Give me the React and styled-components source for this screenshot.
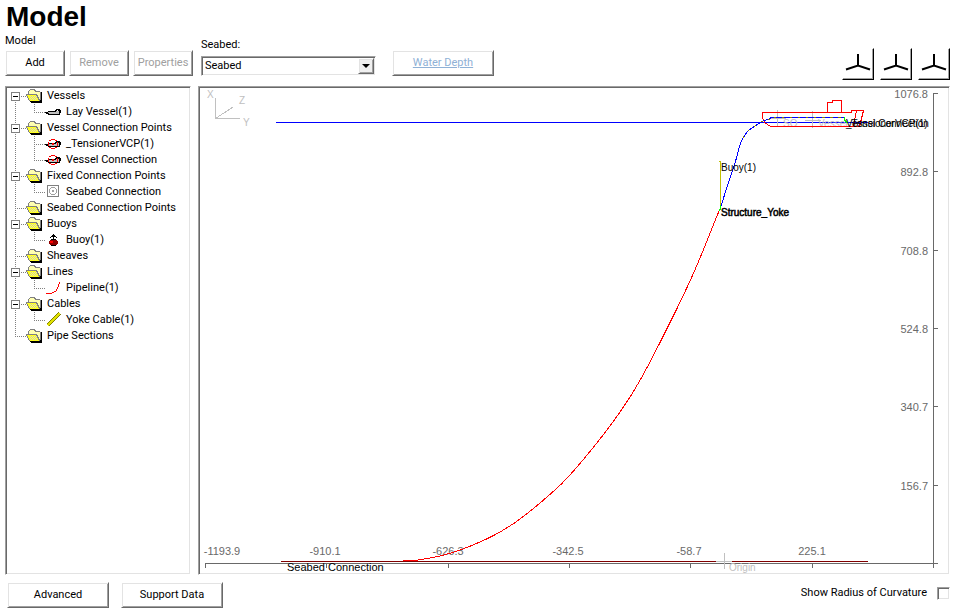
import React, { useState } from 'react';
import styled, { createGlobalStyle, css } from 'styled-components';

const colors = {
  text: '#000',
  disabled: '#a0a0a0',
  link: '#8fb1d6',
  light: '#e3e3e3',
  shadow: '#a0a0a0',
  dark: '#696969',
  face: '#f0f0f0',
  guide: '#808080',
};

const fonts = {
  ui: "Roboto, 'Liberation Sans', sans-serif",
  plot: "'Liberation Sans', Arial, sans-serif",
};

const raised = css`
  border: 1px solid;
  border-color: #fff ${colors.dark} ${colors.dark} #fff;
  box-shadow: inset 1px 1px ${colors.light}, inset -1px -1px ${colors.shadow};
`;

const sunken = css`
  border: 1px solid;
  border-color: ${colors.shadow} #fff #fff ${colors.shadow};
  box-shadow: inset 1px 1px ${colors.dark}, inset -1px -1px ${colors.light};
`;

const GlobalStyle = createGlobalStyle`
  *,
  *::before,
  *::after {
    box-sizing: border-box;
  }

  body {
    margin: 0;
    background: #fff;
    color: ${colors.text};
    font: 11px/16px ${fonts.ui};
  }

  button,
  select,
  input {
    font: inherit;
    color: inherit;
  }
`;

const Page = styled.main`
  padding: 0 10px 8px 5px;
`;

const Title = styled.h1`
  margin: 0;
  padding: 0 1px;
  font: bold 28px/33px ${fonts.plot};
`;

const Toolbar = styled.div`
  display: flex;
  align-items: flex-end;
  margin-bottom: 6px;
`;

const Field = styled.div`
  display: flex;
  flex-direction: column;
  gap: ${props => props.$gap || 0}px;
  margin: 0 ${props => props.$after || 0}px 4px 0;
`;

const ButtonRow = styled.div`
  display: flex;
  gap: ${props => props.$gap}px;
`;

const Button = styled.button`
  ${raised}
  width: ${props => (props.$wide ? 102 : 60)}px;
  height: 26px;
  padding: 0;
  background: #fff;
  white-space: nowrap;

  &:disabled {
    color: ${colors.disabled};
  }
`;

const LinkButton = styled(Button)`
  margin-bottom: 4px;
  color: ${colors.link};
  text-decoration: underline;
`;

const SelectBox = styled.div`
  ${sunken}
  display: grid;
  align-items: center;
  width: 175px;
  height: 20px;
  padding: 1px;

  > * {
    grid-area: 1 / 1;
  }
`;

const Select = styled.select`
  appearance: none;
  width: 100%;
  height: 16px;
  padding: 0 18px 0 2px;
  border: 0;
  background: transparent;
  line-height: 16px;
`;

const SelectArrow = styled.span`
  ${raised}
  display: grid;
  place-items: center;
  justify-self: end;
  width: 16px;
  height: 16px;
  background: ${colors.face};
  pointer-events: none;

  &::before {
    content: '';
    border: 4px solid transparent;
    border-top-color: #000;
    border-bottom: 0;
  }
`;

const Views = styled.div`
  display: flex;
  gap: 6px;
  margin-left: auto;
`;

const ViewButton = styled.button`
  width: 32px;
  height: 32px;
  padding: 0;
  border: 1px solid;
  border-color: #fff #000 #000 #fff;
  box-shadow: inset -1px -1px ${colors.shadow};
  background: #fff;

  svg {
    display: block;
  }
`;

const Panels = styled.div`
  display: grid;
  grid-template-columns: 186px minmax(0, 1fr);
  gap: 7px;
`;

const Panel = styled.section`
  ${sunken}
  padding: 1px;
  background: #fff;
`;

const TreeList = styled.ul`
  margin: 0;
  padding: 0;
  list-style: none;
`;

const TreeRow = styled.div`
  display: flex;
  height: 16px;
  white-space: nowrap;

  svg {
    flex: none;
    margin-right: 5px;
  }
`;

const dotsDown = `repeating-linear-gradient(${colors.guide} 0 1px, transparent 1px 2px)`;
const dotsAcross = `repeating-linear-gradient(90deg, ${colors.guide} 0 1px, transparent 1px 2px)`;

const Guide = styled.span`
  display: flex;
  flex: none;
  align-items: center;
  width: 19px;
  padding-left: 4px;
  background-repeat: no-repeat;
  background-image: ${dotsDown}, ${dotsDown}, ${dotsAcross};
  background-position: 8px 0, 8px 8px, 8px 8px;
  background-size: 1px ${props => (props.$up ? 8 : 0)}px,
    1px ${props => (props.$down ? 8 : 0)}px,
    ${props => (props.$across ? 11 : 0)}px 1px;
`;

const Expander = styled.button`
  display: grid;
  place-items: center;
  width: 9px;
  height: 9px;
  padding: 0;
  border: 1px solid ${colors.guide};
  background: #fff;

  &::before {
    content: '';
    grid-area: 1 / 1;
    width: 5px;
    height: 1px;
    background: #000;
  }

  &[aria-expanded='false']::after {
    content: '';
    grid-area: 1 / 1;
    width: 1px;
    height: 5px;
    background: #000;
  }
`;

const Plot = styled.svg`
  display: block;
  width: 100%;
  height: auto;
  font: 10px ${fonts.plot};
`;

const Footer = styled.footer`
  display: flex;
  align-items: center;
  justify-content: space-between;
  margin-top: 7px;
  padding-left: 2px;
`;

const CheckLabel = styled.label`
  display: flex;
  align-items: center;
  gap: 10px;
  margin-bottom: 4px;
`;

const Checkbox = styled.input`
  ${sunken}
  appearance: none;
  width: 13px;
  height: 13px;
  margin: 0;
  background: #fff;

  &:checked {
    background: linear-gradient(#000, #000) center / 5px 5px no-repeat #fff;
  }
`;

const FolderIcon = () => (
  <svg width="16" height="16" shapeRendering="crispEdges" aria-hidden="true">
    <path d="M3 2h6v2h5v9H3z" fill="#ffffb0" />
    <path d="M2 3h1V2h1V1h5v1h1v1h4v1H9V3H8V2H4v1H3v4H2z" fill="#808080" />
    <path d="M1 7h10l3 6H4z" fill="#ffff20" />
    <path d="M4 8h1v1H4zM6 8h1v1H6zM8 8h1v1H8zM10 8h1v1h-1zM5 9h1v1H5zM7 9h1v1H7zM9 9h1v1H9zM4 10h1v1H4zM6 10h1v1H6zM8 10h1v1H8zM10 10h1v1h-1zM5 11h1v1H5zM7 11h1v1H7zM9 11h1v1H9z" fill="#d8d8c0" />
    <path d="M0 6h11v1h1v2h1v2h1v2h-1v-1h-1v-2h-1V8h-1V7H1v1h1v2h1v2h1v1H3v-1H2v-2H1V8H0z" fill="#808080" />
    <path d="M14 4h1v9h-1z" fill="#808080" />
    <path d="M4 13h10v-1h1V4h1v11H5v-1H4z" />
  </svg>
);

const hull = (
  <>
    <path d="M0 8h3V7h7V6h1V5h4v1h1v3h-1v2H3v-1H1V9H0z" />
    <path d="M3 8h8V7h3v3H4V9H3z" fill="#c0c0c0" />
    <path d="M12 6h1v1h-1z" fill="#fff" />
  </>
);

const itemIcons = {
  vessel: hull,
  connection: (
    <>
      {hull}
      <path
        d="M6 3h4v1H6zM4 4h2v1H4zM10 4h2v1h-2zM3 6h1v4H3zM12 6h1v4h-1zM4 11h2v1H4zM10 11h2v1h-2zM6 12h4v1H6zM7 7h2v2H7z"
        fill="#f00"
      />
    </>
  ),
  fixed: (
    <>
      <path d="M2.500 1.500h11v11h-11z" fill="#fff" stroke="#808080" />
      <path
        d="M6 3h4v1H6zM5 4h1v1H5zM10 4h1v1h-1zM4 5h1v4H4zM11 5h1v4h-1zM5 9h1v1H5zM10 9h1v1h-1zM6 10h4v1H6zM7 6h2v2H7z"
        fill="#a0a0a0"
      />
    </>
  ),
  buoy: (
    <>
      <path d="M8 2h1v5H8zM7 3h3v1H7zM6 4h5v1H6zM5 5h1v1H5zM11 5h1v1h-1z" />
      <path d="M6 7h5v1h1v1h1v3h-1v1h-1v1H6v-1H5v-1H4V9h1V8h1z" fill="#900000" />
      <path d="M5 9h3v2H5z" fill="#f00" />
      <path d="M6 7h5v1H6zM6 13h5v1H6z" />
    </>
  ),
  line: (
    <path
      d="M1 13h6v1H1zM7 12h2v1H7zM9 11h2v1H9zM11 9h1v2h-1zM12 7h1v2h-1zM13 4h1v3h-1zM14 2h1v2h-1z"
      fill="#f00"
    />
  ),
  cable: (
    <>
      <path d="M2.500 13.500l12-12" stroke="#808000" strokeWidth="3" />
      <path d="M2.500 13.500l12-12" stroke="#e0e000" strokeWidth="2" />
    </>
  ),
};

const ItemIcon = ({ kind }) => (
  <svg width="16" height="16" shapeRendering="crispEdges" aria-hidden="true">
    {itemIcons[kind]}
  </svg>
);

const TriadIcon = () => (
  <svg width="30" height="30" viewBox="1 1 30 30" aria-hidden="true">
    <path d="M16 6v11.500M4 21.500l12-4 12 4" fill="none" stroke="#000" strokeWidth="2" />
  </svg>
);

const groups = [
  { name: 'Vessels', items: [['vessel', 'Lay Vessel(1)']] },
  {
    name: 'Vessel Connection Points',
    items: [['connection', '_TensionerVCP(1)'], ['connection', 'Vessel Connection']],
  },
  { name: 'Fixed Connection Points', items: [['fixed', 'Seabed Connection']] },
  { name: 'Seabed Connection Points', items: [] },
  { name: 'Buoys', items: [['buoy', 'Buoy(1)']] },
  { name: 'Sheaves', items: [] },
  { name: 'Lines', items: [['line', 'Pipeline(1)']] },
  { name: 'Cables', items: [['cable', 'Yoke Cable(1)']] },
  { name: 'Pipe Sections', items: [] },
];

const TreeGroup = ({ name, items, first, last }) => {
  const [open, setOpen] = useState(true);

  return (
    <li>
      <TreeRow>
        <Guide $up={!first} $down={!last} $across>
          {items.length > 0 && (
            <Expander
              type="button"
              aria-label={name}
              aria-expanded={open}
              onClick={() => setOpen(!open)}
            />
          )}
        </Guide>
        <FolderIcon />
        {name}
      </TreeRow>
      {open && items.length > 0 && (
        <TreeList>
          {items.map(([kind, label], i) => (
            <li key={label}>
              <TreeRow>
                <Guide $up={!last} $down={!last} />
                <Guide $up $down={i < items.length - 1} $across />
                <ItemIcon kind={kind} />
                {label}
              </TreeRow>
            </li>
          ))}
        </TreeList>
      )}
    </li>
  );
};

const xTicks = [
  [205, '-1193.9', 222],
  [326, '-910.1', 325],
  [448, '-626.3', 448],
  [569, '-342.5', 568],
  [690, '-58.7', 689],
  [812, '225.1', 812],
  [933, '', 933],
];

const yTicks = [
  [93, '1076.8'],
  [171, '892.8'],
  [250, '708.8'],
  [328, '524.8'],
  [406, '340.7'],
  [485, '156.7'],
  [563, ''],
];

const pipeline = [
  [403, 561], [418, 560], [440, 556], [460, 550], [480, 542], [500, 532],
  [520, 519], [547, 497], [570, 475], [607, 430], [630, 397], [650, 362],
  [690, 281], [719, 211],
];

const stinger = [
  [721, 206], [728, 184], [735, 163], [740, 145], [743, 138], [748, 131],
  [755, 126], [763, 121], [770, 119], [777, 117.5], [844, 117.5],
];

// Catmull-Rom through the points, as cubic beziers
const smooth = points =>
  points.slice(1).reduce((d, p2, i) => {
    const p1 = points[i];
    const p0 = points[i - 1] || p1;
    const p3 = points[i + 2] || p2;
    const a = [p1[0] + (p2[0] - p0[0]) / 6, p1[1] + (p2[1] - p0[1]) / 6];
    const b = [p2[0] - (p3[0] - p1[0]) / 6, p2[1] - (p3[1] - p1[1]) / 6];
    return `${d}C${a} ${b} ${p2}`;
  }, `M${points[0]}`);

const ProfilePlot = () => (
  <Plot viewBox="200 88 748 485" role="img" aria-label="Pipelay profile">
    <g fill="none" shapeRendering="crispEdges">
      <path d="M215.500 98v20.500H240M215.500 118.500L233 107" stroke="#c0c0c0" />
      <path d="M205 563.500h733M933.500 93v475" stroke={colors.dark} />
      {xTicks.map(([x]) => (
        <path key={x} d={`M${x + 0.5} 563v5`} stroke={colors.dark} />
      ))}
      {yTicks.map(([y]) => (
        <path key={y} d={`M933 ${y + 0.5}h5`} stroke={colors.dark} />
      ))}
      <path d="M276 122.500h592" stroke="#00f" />
      <path d="M281 561.500h587" stroke="#800000" />
      <path d="M716 561.500h16M724.500 553v16" stroke="#c0c0c0" />
    </g>
    <g fill={colors.dark} fontSize="11">
      {xTicks.map(([x, label, center]) => (
        <text key={x} x={center} y="555" textAnchor="middle">{label}</text>
      ))}
      {yTicks.map(([y, label]) => (
        <text key={y} x="928" y={y + 5} textAnchor="end">{label}</text>
      ))}
    </g>
    <g fill="#c0c0c0">
      <text x="207" y="98">X</text>
      <text x="239" y="104">Z</text>
      <text x="243" y="126">Y</text>
      <text x="729" y="571">Origin</text>
      <text x="783" y="127">SO</text>
      <text x="818" y="127">Vessel</text>
    </g>
    <g fill="none" shapeRendering="crispEdges">
      <path d="M777.500 110v17M770 118.500h16M812.500 111v17M805 120.500h16" stroke="#c0c0c0" />
      <path
        d="M762.500 112.500h89v-2h12l-4 16h-89l-6-4-2-5zM827.500 112v-10h5v-2h9v12M856.500 110.500l-3 16"
        stroke="#f00"
      />
      <path d={smooth(pipeline)} stroke="#f00" />
      <path d={smooth(stinger)} stroke="#00f" />
      <path d={smooth(stinger.slice(4))} stroke="#808000" strokeDasharray="2 6" />
      <path d="M720.500 161v45M719 161.500h2" stroke="#c0c000" />
      <path d="M720.500 205v3l-1 3M844.500 117v3l3 3" stroke="#0f0" />
    </g>
    <g>
      <text x="721" y="171">Buoy(1)</text>
      <text x="721" y="216" stroke="#000" strokeWidth="0.5">Structure_Yoke</text>
      <text x="287" y="571" fontSize="11">Seabed Connection</text>
      <text x="846" y="127">_TensionerVCP(1)</text>
      <text x="846" y="127">Vessel Connection</text>
    </g>
  </Plot>
);

const App = () => {
  const [curvature, setCurvature] = useState(false);

  return (
    <Page>
      <GlobalStyle />
      <Title>Model</Title>
      <Toolbar>
        <Field $after={8} $gap={1}>
          <span>Model</span>
          <ButtonRow $gap={4}>
            <Button type="button">Add</Button>
            <Button type="button" disabled>Remove</Button>
            <Button type="button" disabled>Properties</Button>
          </ButtonRow>
        </Field>
        <Field $after={16} $gap={3}>
          <label htmlFor="seabed">Seabed:</label>
          <SelectBox>
            <Select id="seabed" defaultValue="Seabed">
              <option>Seabed</option>
            </Select>
            <SelectArrow />
          </SelectBox>
        </Field>
        <LinkButton type="button" $wide>Water Depth</LinkButton>
        <Views>
          {['Front view', 'Side view', 'Top view'].map(view => (
            <ViewButton key={view} type="button" aria-label={view}>
              <TriadIcon />
            </ViewButton>
          ))}
        </Views>
      </Toolbar>
      <Panels>
        <Panel>
          <TreeList>
            {groups.map((group, i) => (
              <TreeGroup
                key={group.name}
                {...group}
                first={i === 0}
                last={i === groups.length - 1}
              />
            ))}
          </TreeList>
        </Panel>
        <Panel>
          <ProfilePlot />
        </Panel>
      </Panels>
      <Footer>
        <ButtonRow $gap={12}>
          <Button type="button" $wide>Advanced</Button>
          <Button type="button" $wide>Support Data</Button>
        </ButtonRow>
        <CheckLabel>
          Show Radius of Curvature
          <Checkbox
            type="checkbox"
            checked={curvature}
            onChange={e => setCurvature(e.target.checked)}
          />
        </CheckLabel>
      </Footer>
    </Page>
  );
};

export default App;
